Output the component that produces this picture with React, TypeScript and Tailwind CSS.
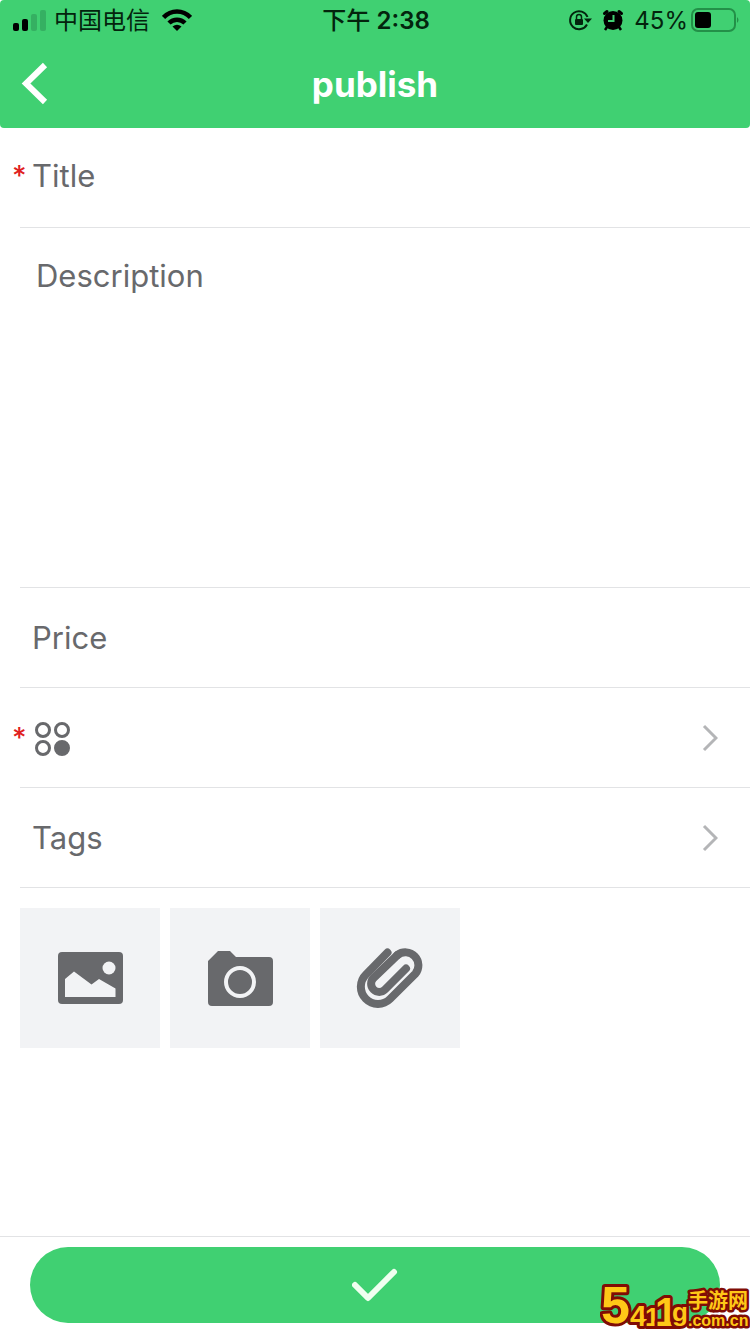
import React, { useState } from 'react';

const FIELD = 'block w-full bg-transparent text-[31px] leading-10 text-[#68696c] placeholder:text-[#68696c] placeholder:opacity-100 outline-none';

function StatusBar() {
  return (
    <div className="grid h-10 grid-cols-[1fr_auto_1fr] items-center pl-3 pr-2.5 text-2xl leading-8 text-[#03240d]">
      <div className="flex items-center gap-2">
        <svg width="34" height="22" viewBox="0 0 34 22" aria-hidden="true">
          <rect x="1" y="14" width="6" height="8" rx="2" fill="#000" />
          <rect x="10" y="10" width="6" height="12" rx="2" fill="#000" />
          <rect x="19" y="5" width="6" height="17" rx="2" fill="#35b062" />
          <rect x="28" y="1" width="6" height="21" rx="2" fill="#35b062" />
        </svg>
        <span className="pt-0.5">中国电信</span>
        <svg className="ml-1" width="30" height="22" viewBox="0 0 30 22" aria-hidden="true">
          <g fill="none" stroke="#000" strokeWidth="4.500">
            <path d="M1.500 8.500C9 .5 21 .5 28.500 8.500" />
            <path d="M7 14C11.500 9.500 18.500 9.500 23 14" />
          </g>
          <path d="M10.500 17.500Q15 14 19.500 17.500L15 22Z" fill="#000" />
        </svg>
      </div>
      <div className="pt-0.5 font-medium">
        下午 <span className="font-semibold">2:38</span>
      </div>
      <div className="flex items-center justify-end gap-1.5">
        <svg width="24" height="22" viewBox="0 0 24 22" aria-hidden="true">
          <path d="M19 15.500A9 9 0 1 1 19.500 8" fill="none" stroke="#03240d" strokeWidth="2" />
          <path d="M16 9.500H24L20 14Z" fill="#03240d" />
          <rect x="7" y="10" width="8" height="6" rx="1" fill="#03240d" />
          <path d="M8.500 10V8a2.500 2.500 0 0 1 5 0v2" fill="none" stroke="#03240d" strokeWidth="1.500" />
        </svg>
        <svg className="ml-1" width="22" height="22" viewBox="0 0 22 22" aria-hidden="true">
          <circle cx="11" cy="11.500" r="9.500" fill="#000" />
          <path d="M2.500 4.500L5 2.500M19.500 4.500L17 2.500" stroke="#000" strokeWidth="3" strokeLinecap="round" />
          <path d="M5 18L3 21M17 18L19 21" stroke="#000" strokeWidth="2.500" />
          <path d="M11.500 6V12H6" fill="none" stroke="#40d072" strokeWidth="2" />
        </svg>
        <span className="ml-1 pt-0.5">45%</span>
        <svg className="-ml-1" width="50" height="24" viewBox="0 0 50 24" aria-hidden="true">
          <rect x="2" y="1" width="43" height="22" rx="6" fill="none" stroke="#239048" strokeWidth="2" />
          <rect x="5" y="4" width="16" height="16" rx="3" fill="#000" />
          <path d="M47 9Q50 12 47 15Z" fill="#239048" />
        </svg>
      </div>
    </div>
  );
}

function Required() {
  return <span className="w-4 shrink-0 text-left text-[28px] font-medium leading-8 text-[#e02020]" aria-hidden="true">*</span>;
}

function Chevron() {
  return (
    <svg width="16" height="28" viewBox="0 0 16 28" fill="none" stroke="#b4b5b7" strokeWidth="3" aria-hidden="true">
      <path d="M2 2L14 14L2 26" />
    </svg>
  );
}

function ImageIcon() {
  return (
    <svg width="66" height="60" viewBox="0 0 66 60" aria-hidden="true">
      <rect x="1" y="4" width="65" height="52" rx="4" fill="#68696c" />
      <circle cx="52" cy="20" r="6.500" fill="#f2f3f5" />
      <path d="M8 31L17 23.500L34.500 36.500L42 31L58.500 40.500V49H8Z" fill="#f2f3f5" />
    </svg>
  );
}

function CameraIcon() {
  return (
    <svg width="66" height="60" viewBox="0 0 66 60" aria-hidden="true">
      <path d="M1 13L11 3H23L29 9H62Q66 9 66 13V54Q66 58 62 58H5Q1 58 1 54Z" fill="#68696c" />
      <circle cx="33" cy="34" r="14" fill="none" stroke="#f2f3f5" strokeWidth="4" />
    </svg>
  );
}

function ClipIcon() {
  return (
    <svg width="68" height="62" viewBox="0 0 68 62" fill="none" stroke="#68696c" strokeLinecap="round" aria-hidden="true">
      <path d="M31.500 5.500L10 27.500A17 17 0 0 0 34 52L59.500 26.500A13 13 0 0 0 41.500 8" strokeWidth="8" />
      <path d="M41.500 8L17.500 31A8 8 0 0 0 29 42.500L50 21.500" strokeWidth="8" />
    </svg>
  );
}

const ATTACHMENTS = [
  { label: 'Add image', Icon: ImageIcon },
  { label: 'Take photo', Icon: CameraIcon },
  { label: 'Attach file', Icon: ClipIcon },
];

function SiteBadge() {
  return (
    <svg
      className="pointer-events-none absolute bottom-0 right-0"
      width="150"
      height="54"
      viewBox="0 0 150 54"
      role="img"
      aria-label="5419 手游网 .com.cn"
    >
      <g
        fill="#ffc817"
        stroke="#800c05"
        strokeWidth="6"
        strokeLinejoin="round"
        paintOrder="stroke"
        fontFamily="'Liberation Sans', 'Noto Sans CJK SC', sans-serif"
        fontWeight="700"
      >
        <text x="1" y="43" fontSize="52">5</text>
        <text x="30" y="46" fontSize="30">4</text>
        <text x="45" y="46" fontSize="26">1</text>
        <text x="55" y="46" fontSize="40">1</text>
        <text x="72" y="41" fontSize="26">g</text>
        <g strokeWidth="5">
          <text x="88" y="28" fontSize="20">手游网</text>
          <text x="88" y="46" fontSize="16">.com.cn</text>
        </g>
      </g>
    </svg>
  );
}

export default function App() {
  const [title, setTitle] = useState('');
  const [description, setDescription] = useState('');
  const [price, setPrice] = useState('');

  return (
    <div className="relative flex min-h-screen flex-col bg-white font-[Inter,'Noto_Sans_CJK_SC',sans-serif]">
      <header className="h-32 rounded-sm bg-[#40d072]">
        <StatusBar />
        <div className="grid h-[88px] grid-cols-[64px_1fr_64px] items-center">
          <button type="button" aria-label="Back" className="flex h-full items-center pl-5">
            <svg width="28" height="44" viewBox="0 0 28 44" fill="none" stroke="#fff" strokeWidth="6" aria-hidden="true">
              <path d="M25 3L6 21.500L25 40" />
            </svg>
          </button>
          <h1 className="text-center text-[35px] font-bold leading-10 text-white">publish</h1>
        </div>
      </header>

      <form className="flex flex-1 flex-col" onSubmit={(e) => e.preventDefault()}>
        <div className="flex-1">
          <div className="ml-5 h-[100px] border-b border-[#e2e3e5]">
            <div className="-ml-2 flex items-center pt-7">
              <Required />
              <input
                className={FIELD + ' pl-1'}
                aria-label="Title"
                placeholder="Title"
                value={title}
                onChange={(e) => setTitle(e.target.value)}
              />
            </div>
          </div>
          <div className="ml-5 h-[360px] border-b border-[#e2e3e5]">
            <textarea
              className={FIELD + ' h-full resize-none pl-4 pt-7'}
              aria-label="Description"
              placeholder="Description"
              value={description}
              onChange={(e) => setDescription(e.target.value)}
            />
          </div>
          <div className="ml-5 h-[100px] border-b border-[#e2e3e5]">
            <input
              className={FIELD + ' h-full pl-3'}
              aria-label="Price"
              placeholder="Price"
              value={price}
              onChange={(e) => setPrice(e.target.value)}
            />
          </div>
          <div className="ml-5 h-[100px] border-b border-[#e2e3e5]">
            <button type="button" aria-label="Category" className="-ml-2 flex h-full w-full items-center">
              <Required />
              <svg className="ml-1" width="40" height="40" viewBox="0 0 40 40" fill="none" stroke="#68696c" strokeWidth="3" aria-hidden="true">
                <circle cx="11" cy="12" r="6.500" />
                <circle cx="30" cy="12" r="6.500" />
                <circle cx="11" cy="30" r="6.500" />
                <circle cx="30" cy="30" r="6.500" fill="#68696c" />
              </svg>
              <span className="ml-auto pr-6"><Chevron /></span>
            </button>
          </div>
          <div className="ml-5 h-[100px] border-b border-[#e2e3e5]">
            <button type="button" className="flex h-full w-full items-center justify-between pl-3 pr-8 text-[31px] leading-10 text-[#68696c]">
              Tags
              <Chevron />
            </button>
          </div>

          <div className="flex gap-2.5 p-5">
            {ATTACHMENTS.map(({ label, Icon }) => (
              <button
                key={label}
                type="button"
                aria-label={label}
                className="flex size-[140px] items-center justify-center bg-[#f2f3f5]"
              >
                <Icon />
              </button>
            ))}
          </div>
        </div>

        <footer className="border-t border-[#e2e3e5] px-[30px] pb-[11px] pt-2.5">
          <button type="submit" aria-label="Publish" className="flex h-[76px] w-full items-center justify-center rounded-full bg-[#40d072]">
            <svg width="46" height="34" viewBox="0 0 46 34" fill="none" stroke="#f0fff0" strokeWidth="6" strokeLinecap="round" strokeLinejoin="round" aria-hidden="true">
              <path d="M3 17L16 30L42 4" />
            </svg>
          </button>
        </footer>
      </form>
      <SiteBadge />
    </div>
  );
}
